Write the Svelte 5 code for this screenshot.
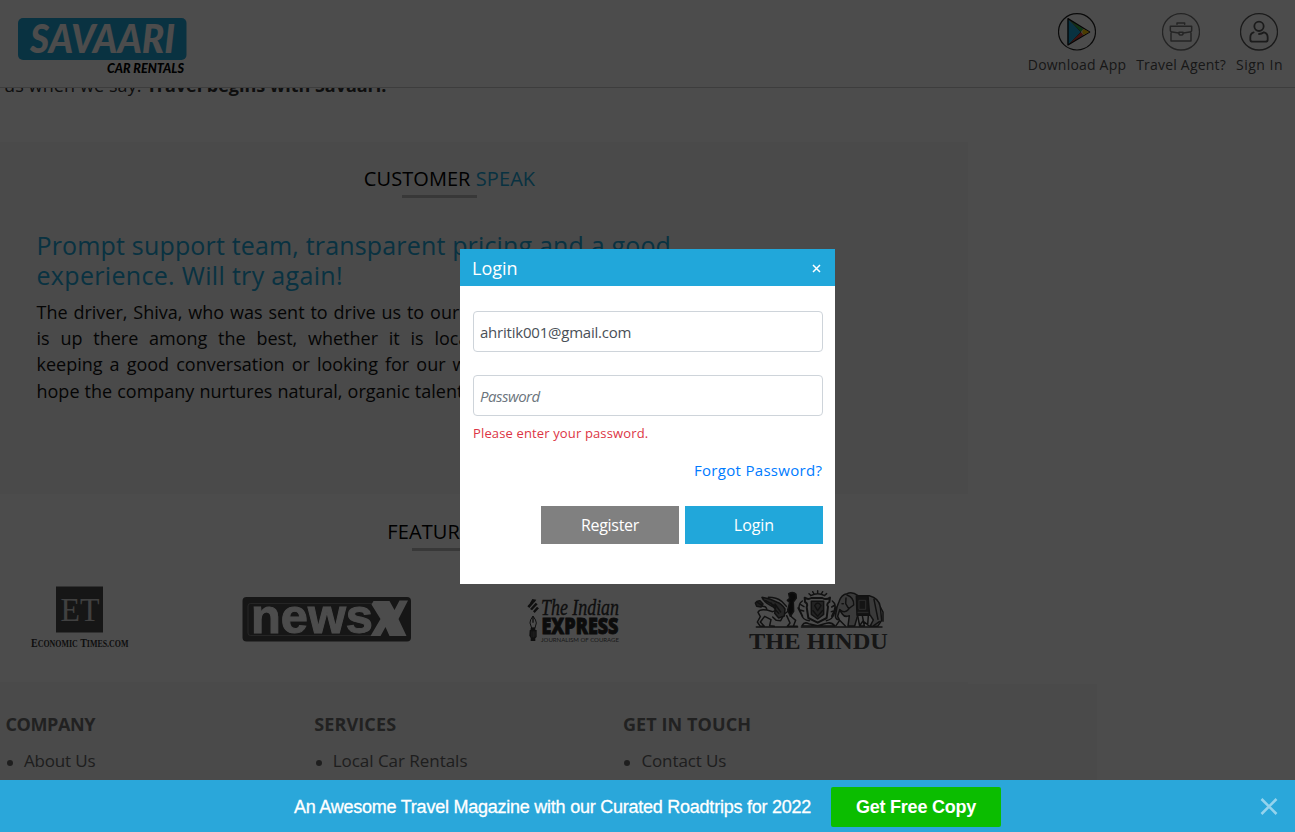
<script>
  const columns = [
    { title: 'COMPANY', link: 'About Us', ts: '-0.4px', ls: '-0.17px' },
    { title: 'SERVICES', link: 'Local Car Rentals', ts: '0.13px', ls: '-0.03px' },
    { title: 'GET IN TOUCH', link: 'Contact Us', ts: '0.1px', ls: '-0.1px' }
  ];
  let email = $state('ahritik001@gmail.com');
  let password = $state('');
</script>

<div class="page">
  <header>
    <svg class="logo" width="172" height="60" viewBox="16 16 172 60">
      <rect x="18" y="18" width="168.5" height="42" rx="5" fill="#21a7da" />
      <text x="30" y="53" class="brand" textLength="145" lengthAdjust="spacingAndGlyphs">SAVAARI</text>
      <text x="107" y="72.5" class="sub" textLength="77" lengthAdjust="spacingAndGlyphs">CAR RENTALS</text>
    </svg>
    <nav>
      <a href="#app-store">
        <svg width="38" height="38" viewBox="174 38 114 114" fill="none">
          <ellipse cx="231" cy="94.500" rx="55.500" ry="54.500" stroke="#222" stroke-width="3.500" />
          <path d="M203 56V133L243 95Z" fill="#21a7da" />
          <path d="M206 56L250 86L243 95Z" fill="#2fb344" />
          <path d="M206 133L250 104L243 95Z" fill="#dc3a35" />
          <path d="M204 55L269 95L204 134Z" stroke="#111" stroke-width="4" stroke-linejoin="round" />
          <path d="M206 57L243 95L206 132" stroke="#222" stroke-width="2" />
          <path d="M251 86L268 95L251 104Q242 95 251 86Z" fill="#fdc800" />
        </svg>
        <span>Download App</span>
      </a>
      <a href="#agent">
        <svg width="38" height="38" viewBox="486 38 114 114" fill="none" stroke="#7a7a7a" stroke-width="4.500" stroke-linejoin="round" stroke-linecap="round">
          <ellipse cx="543" cy="94.500" rx="55.500" ry="54.500" stroke-width="4" />
          <path d="M531 72V68H554V72" />
          <path d="M511 78H575V90Q575 95 569 95L550 98M511 78V90Q511 95 517 95L536 98M513 98V122H573V98" />
          <path d="M537 96H549V100Q549 104 543 104Q537 104 537 100Z" />
        </svg>
        <span>Travel Agent?</span>
      </a>
      <a href="#signin">
        <svg width="38" height="38" viewBox="720 38 114 114" fill="none" stroke="#5a5a5a" stroke-width="5.500" stroke-linecap="round">
          <ellipse cx="777" cy="94.500" rx="55.500" ry="54.500" stroke-width="4" />
          <circle cx="777" cy="78" r="14" />
          <path d="M761 96Q751 99 751 111V118Q751 124 758 124H796Q803 124 803 118V111Q803 99 792 96Q785 101 777 101" />
        </svg>
        <span class="si">Sign In</span>
      </a>
    </nav>
  </header>

  <main>
    <p class="intro">us when we say. <b>Travel begins with Savaari!</b></p>

    <section class="speak">
      <h2>CUSTOMER <em>SPEAK</em></h2>
      <i class="rule"></i>
      <h3><span class="h1st">Prompt support team, transparent pricing and a good</span><br /><span class="h2nd">experience. Will try again!</span></h3>
      <p>
        <span style="--w:1.2px">The driver, Shiva, who was sent to drive us to our</span>
        <span style="--w:6.1px">is up there among the best, whether it is local</span>
        <span style="--w:2.4px">keeping a good conversation or looking for our way</span>
        <span style="--w:0.4px">hope the company nurtures natural, organic talent</span>
      </p>
    </section>

    <section class="featured">
      <h2>FEATURED <em>IN</em></h2>
      <i class="rule"></i>
      <div class="press">
        <svg width="104" height="80" viewBox="28 575 104 80">
          <rect x="56" y="586.500" width="47" height="46" fill="#4b4b4b" />
          <text x="60.500" y="621" class="serif light" font-size="34" textLength="39" lengthAdjust="spacingAndGlyphs">ET</text>
          <text x="31" y="646.500" class="serif heavy" font-size="12" textLength="97.500" lengthAdjust="spacingAndGlyphs">E<tspan font-size="9.500">CONOMIC</tspan> T<tspan font-size="9.500">IMES.COM</tspan></text>
        </svg>
        <svg width="170" height="80" viewBox="241.500 575 170 80">
          <rect x="242" y="597" width="168.500" height="44.500" rx="4" fill="#4b4b4b" />
          <path d="M372 603.500H250Q247.500 603.500 247.500 606V633Q247.500 635.500 250 635.500H371" fill="none" stroke="#8a8a8a" stroke-width=".8" />
          <text x="250.500" y="633" class="news" font-size="49" textLength="122" lengthAdjust="spacingAndGlyphs">news</text>
          <path d="M371 604.500L373 601H389L394 610L399 600.500H407.500L398 619L406 636H389L385 627L380 636H370L380 619Z" fill="#fff" />
        </svg>
        <svg width="96" height="80" viewBox="526 575 96 80">
          <g transform="translate(500 570) scale(.33333)" fill="#333">
            <path d="M82 109L98 91L104 96L88 114ZM90 117L107 98L113 103L96 121ZM99 124L111 110L117 115L104 129ZM90 99L97 87L109 89L104 97Z" />
            <path d="M99 138Q89 151 90 159L95 174H105L109 159Q109 151 99 138Z" fill="none" stroke="#333" stroke-width="3" />
            <path d="M97 140H101V158H97ZM92 173H106V180H92ZM89 181L94 178L110 180V201L106 205V213H92V204L88 197Z" />
            <path d="M96 184V202M101 184V202M105 184V200" stroke="#999" stroke-width="1.500" />
          </g>
          <text x="541" y="614.500" class="ind" font-size="23" textLength="78" lengthAdjust="spacingAndGlyphs">The Indian</text>
          <text x="541.500" y="634" class="exp" font-size="23" textLength="77" lengthAdjust="spacingAndGlyphs">EXPRESS</text>
          <text x="541" y="641.500" class="cour" font-size="5.200" textLength="78" lengthAdjust="spacingAndGlyphs">JOURNALISM OF COURAGE</text>
        </svg>
        <svg width="142" height="80" viewBox="748 575 142 80">
          <g transform="translate(730 570) scale(.33333)" fill="none" stroke="#3a3a3a" stroke-width="4.500" stroke-linecap="round" stroke-linejoin="round">
            <path d="M76 99Q80 91 90 92L99 102L93 111L80 109Z" fill="#6a6a6a" />
            <path d="M82 97L95 105M95 109Q109 107 111 120Q88 116 84 127L91 140L82 156L91 169H103L91 156L104 139L123 149L119 167L133 169M111 120L128 125L145 119L163 132L175 123M163 132L152 152L139 151L128 141M175 123L185 141L197 151L190 169H202M170 137L180 159L172 169H188" />
            <path d="M96 82Q120 86 140 96Q155 101 165 117L163 138L146 144L134 130L137 113Q105 102 96 82Z" fill="#808080" />
            <path d="M107 92L143 112M115 82Q140 82 155 94L169 109M123 99L136 119L146 130M135 102L152 126" />
            <path d="M176 71Q190 63 198 73L199 84L190 96L191 124L181 139L173 120L179 97L172 91L179 85Z" fill="#222" />
            <path d="M224 83Q234 90 244 84H277Q289 91 300 83L298 96Q288 102 294 110L290 144L263 158L235 144L230 111Q235 101 225 96Z" stroke-width="6" />
            <path d="M244 94H281V133L263 147L244 133Z" fill="#777" />
            <path d="M249 122L263 139L277 122M254 107Q263 91 273 107L263 122ZM238 152Q219 151 214 133L204 114M289 152Q308 149 314 128L319 112M217 93Q204 102 208 118L218 139M307 93Q320 103 313 121L305 139M242 77Q263 65 284 77M263 62V70M248 65L252 72M278 65L274 72M237 71L242 76M290 71L284 76M212 104L222 110M210 120L221 123M315 105L305 111M315 121L304 125M216 167Q223 154 236 161L263 167L289 160Q304 155 315 168Z" />
            <path d="M327 95Q334 73 351 71Q367 64 384 77L418 77Q447 84 451 111L455 151L443 169H420L430 150L421 136H383L374 168H354L358 137Q344 143 337 132L329 120L323 139L328 149Q317 150 316 138L321 111Z" fill="#c4c4c4" />
            <path d="M351 75Q373 83 371 105L356 116L347 101L348 84M329 119Q344 132 356 118M336 101H340M451 111L459 126V154M383 137L389 168H403L397 137M415 137L413 165M318 167L329 151L346 168M389 167L399 153L417 167M431 167L448 155M432 88L444 148" />
            <path d="M379 78H414L419 136H381Z" fill="#444" />
            <path d="M388 91H407V118H388ZM384 127H414" stroke="#a0a0a0" stroke-width="2.500" />
            <path d="M79 171H203M214 171H456" />
          </g>
          <text x="749" y="648.500" class="serif hindu" font-size="24" textLength="139" lengthAdjust="spacingAndGlyphs">THE HINDU</text>
        </svg>
      </div>
    </section>

    <footer>
      {#each columns as c}
        <div class="col">
          <h4 style="letter-spacing:{c.ts}">{c.title}</h4>
          <ul><li style="letter-spacing:{c.ls}">{c.link}</li></ul>
        </div>
      {/each}
    </footer>
  </main>

  <div class="overlay">
    <div class="modal" role="dialog">
      <div class="mhead">
        <h5>Login</h5>
        <button class="x" aria-label="Close">
          <svg width="9" height="9" viewBox="0 0 9 9"><path d="M1 1L8 8M8 1L1 8" stroke="#fff" stroke-width="1.500" /></svg>
        </button>
      </div>
      <form>
        <input type="text" bind:value={email} />
        <input class="pw" type="password" placeholder="Password" bind:value={password} />
        <p class="error">Please enter your password.</p>
        <a class="forgot" href="#forgot">Forgot Password?</a>
        <div class="actions">
          <button type="button" class="reg">Register</button>
          <button type="button" class="log">Login</button>
        </div>
      </form>
    </div>
  </div>

  <aside>
    <span>An Awesome Travel Magazine with our Curated Roadtrips for 2022</span>
    <button class="copy">Get Free Copy</button>
    <svg class="close" width="18" height="18" viewBox="0 0 18 18"><path d="M1.500 1L16.500 16M16.500 1L1.500 16" stroke="#94d3ed" stroke-width="2.600" /></svg>
  </aside>
</div>

<style>
  :global(body) { margin: 0; background: #fff; overflow: hidden; }
  * { box-sizing: border-box; }
  .page { position: relative; width: 1295px; height: 832px; overflow: hidden; background: #fff; font-family: "Open Sans", "Noto Sans", sans-serif; display: flex; flex-direction: column; }
  h2, h3, h4, h5, p, ul { margin: 0; font-weight: 400; }
  button { border: 0; padding: 0; font-family: inherit; cursor: pointer; }

  header { flex: none; height: 88px; border-bottom: 1px solid #ccc; display: flex; justify-content: space-between; padding: 13px 12px 0 16px; }
  .logo { margin-top: 3px; }
  .brand { font: italic 900 39px Lato, sans-serif; fill: #fff; }
  .sub { font: italic 900 14px Lato, sans-serif; fill: #000; }
  nav { display: flex; gap: 10px; }
  nav a { display: flex; flex-direction: column; align-items: center; color: #505050; text-decoration: none; font-size: 14px; line-height: 20px; letter-spacing: .2px; }
  nav svg { display: block; margin-bottom: 4px; }
  .si { letter-spacing: .5px; }

  main { flex: 1; overflow: hidden; }
  .intro { margin-top: -16px; padding-left: 4px; height: 70px; font-size: 18px; line-height: 26px; letter-spacing: .1px; color: #333; white-space: nowrap; }
  .intro b { letter-spacing: -.02px; }
  section { width: 968px; display: flex; flex-direction: column; }
  .speak { height: 352px; background: #f7f7f7; padding-top: 23px; }
  h2 { width: 899px; text-align: center; font-size: 20px; line-height: 27px; letter-spacing: .07px; color: #000; }
  h2 em { font-style: normal; color: #21a7da; }
  .rule { display: block; width: 75px; height: 3px; background: #bcbcbc; margin: 3px 0 0 402px; }
  h3 { margin: 32px 0 0 36.5px; font-size: 25px; line-height: 30px; color: #21a7da; white-space: nowrap; }
  .h1st { letter-spacing: .17px; }
  .h2nd { letter-spacing: .32px; }
  .speak p { margin: 9px 0 0 36.5px; display: flex; flex-direction: column; font-size: 18px; line-height: 26.2px; color: #111; }
  .speak p span { white-space: nowrap; word-spacing: var(--w); }
  .featured { height: 190px; padding-top: 24px; }
  .featured .rule { margin-left: 412px; }
  .featured::after { content: ""; height: 2px; background: #f7f7f7; }
  .press { display: flex; flex: 1; align-items: flex-start; padding: 24px 0 0 28px; }
  .press svg { display: block; flex: none; }
  .press svg:nth-child(2) { margin-left: 109.5px; }
  .press svg:nth-child(3) { margin-left: 114.5px; }
  .press svg:nth-child(4) { margin-left: 126px; }
  .serif { font-family: "Liberation Serif", serif; }
  .light { fill: #d5d5d5; }
  .heavy { font-weight: 700; fill: #333; }
  .hindu { font-weight: 700; fill: #4b4b4b; }
  .news { font-family: "Liberation Sans", sans-serif; font-weight: 700; fill: #fff; stroke: #fff; stroke-width: 1; }
  .ind { font-family: "Liberation Serif", serif; font-style: italic; fill: #333; stroke: #333; stroke-width: .4; }
  .exp { font-family: "Open Sans", sans-serif; font-weight: 800; fill: #2a2a2a; stroke: #2a2a2a; stroke-width: .9; }
  .cour { font-family: Lato, sans-serif; fill: #555; }

  footer { width: 1097px; height: 148px; background: #f7f7f7; padding: 27px 0 0 5.5px; display: flex; }
  .col { width: 308.7px; }
  h4 { font-size: 18px; line-height: 27px; font-weight: 700; color: #707070; }
  ul { list-style: none; padding: 0; margin-top: 10px; font-size: 17px; line-height: 26px; color: #666; }
  li { display: flex; align-items: center; gap: 11px; }
  li::before { content: ""; width: 6px; height: 6px; border-radius: 50%; background: #666; margin: 4px 0 0 1.5px; }

  .overlay { position: absolute; inset: 0; background: rgba(0, 0, 0, .7); display: flex; justify-content: center; align-items: flex-start; padding-top: 249px; }
  .modal { width: 375px; height: 335px; background: #fff; }
  .mhead { height: 37px; background: #21a7da; display: flex; align-items: center; justify-content: space-between; padding: 0 14px 0 12px; }
  h5 { color: #fff; font-size: 18px; line-height: 25px; letter-spacing: 0; padding-top: 1px; }
  .x { background: none; display: flex; padding-top: 1px; }
  form { padding: 25px 12px 0 13px; display: flex; flex-direction: column; }
  input { width: 350px; height: 41px; border: 1px solid #ced4da; border-radius: 4px; padding: 0 6px; font: 15px "Open Sans", sans-serif; letter-spacing: -.22px; color: #495057; background: #fff; outline: 0; }
  .pw { margin-top: 23px; }
  .pw::placeholder { color: #6c757d; font-style: italic; letter-spacing: -.5px; opacity: 1; }
  .error { margin-top: 8px; font-size: 13px; line-height: 18px; letter-spacing: .14px; color: #dc3545; }
  .forgot { align-self: flex-end; margin: 17px .7px 0 0; font-size: 15px; line-height: 22px; letter-spacing: .31px; color: #007bff; text-decoration: none; }
  .actions { display: flex; justify-content: flex-end; gap: 6px; margin-top: 25px; }
  .actions button { width: 138px; height: 38px; color: #fff; font-size: 16px; }
  .reg { background: #808080; letter-spacing: -.3px; }
  .log { background: #21a7da; letter-spacing: -.05px; }

  aside { position: absolute; left: 0; right: 0; bottom: 0; height: 52px; background: #2aa7da; display: flex; align-items: center; padding-left: 294px; color: #fff; font: 18px "Liberation Sans", sans-serif; letter-spacing: -.24px; padding-top: 2px; }
  aside span { width: 537px; white-space: nowrap; -webkit-text-stroke: .3px #fff; }
  .copy { width: 170px; height: 40px; border-radius: 2px; background: #0bbd00; color: #fff; font: 700 18px "Liberation Sans", sans-serif; letter-spacing: -.25px; }
  .close { margin-left: 259px; }
</style>
